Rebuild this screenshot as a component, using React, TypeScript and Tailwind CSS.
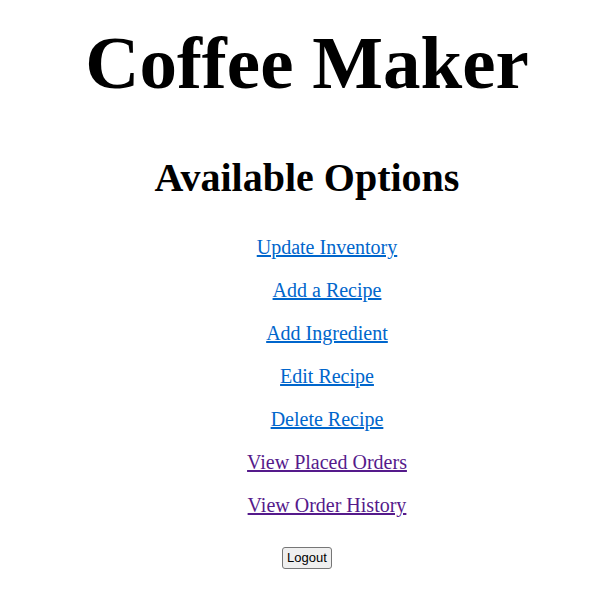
const links = [
  { label: "Update Inventory", visited: false },
  { label: "Add a Recipe", visited: false },
  { label: "Add Ingredient", visited: false },
  { label: "Edit Recipe", visited: false },
  { label: "Delete Recipe", visited: false },
  { label: "View Placed Orders", visited: true },
  { label: "View Order History", visited: true },
]

export default function App() {
  return (
    <div className="flex min-h-screen flex-col items-center bg-white pl-[10px] font-['Liberation_Serif',serif] text-black">
      <h1 className="mt-[25px] text-[75px] font-bold leading-none">Coffee Maker</h1>

      <h2 className="mt-[58px] text-[40px] font-bold leading-none">Available Options</h2>

      {/* Menu links */}
      <ul className="mt-[38px] flex flex-col items-center gap-[20px] pl-[40px]">
        {links.map((link) => (
          <li key={link.label} className="text-[20px] leading-[23px]">
            <a
              href="#"
              className={link.visited ? "text-[#551a8b] underline" : "text-[#0066cc] underline"}
            >
              {link.label}
            </a>
          </li>
        ))}
      </ul>

      <button className="mt-[30px] h-[22px] rounded-[3px] border border-[#767676] bg-[#efefef] px-[4px] font-['Liberation_Sans',sans-serif] text-[13px] leading-[18px] text-black">
        Logout
      </button>
    </div>
  )
}
